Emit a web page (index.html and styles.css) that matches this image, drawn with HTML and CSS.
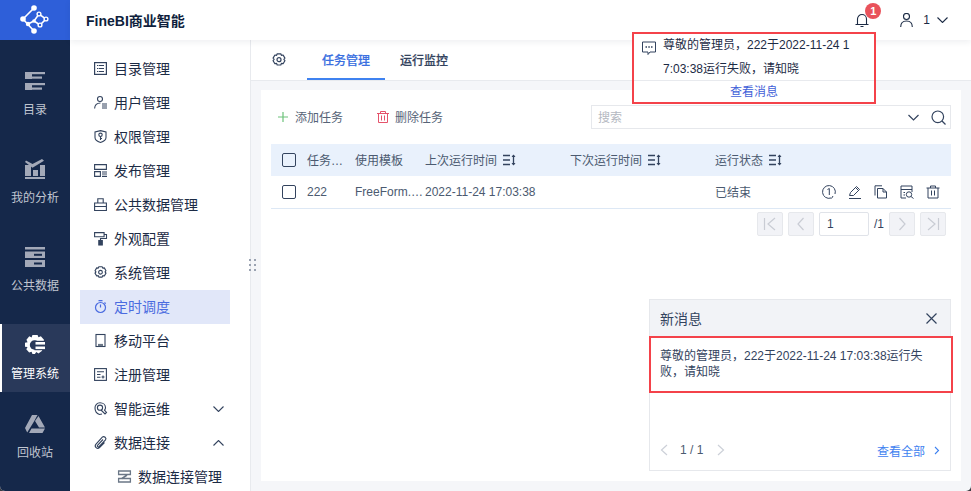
FILE: index.html
```html
<!DOCTYPE html>
<html lang="zh-CN">
<head>
<meta charset="utf-8">
<title>FineBI商业智能</title>
<link rel="stylesheet" href="styles.css">
</head>
<body>
<div class="app">
  <aside class="rail">
    <div class="logo">
      <svg width="32" height="32" viewBox="0 0 32 32" fill="none" stroke="#fff" stroke-width="1.600"><path d="M15 4 4 15l11 12M9 20l6-3 6 4 6-6-7-5-5 7"/><g fill="#fff" stroke="none"><circle cx="15" cy="4" r="2.800"/><circle cx="4" cy="15" r="2.800"/><circle cx="15" cy="27" r="2.800"/><circle cx="9" cy="20" r="2.200"/><circle cx="15" cy="17" r="1.800"/></g><g fill="#2e5fd9" stroke-width="1.400"><circle cx="20" cy="10" r="1.900"/><circle cx="27" cy="15" r="1.900"/><circle cx="21" cy="21" r="1.900"/></g></svg>
    </div>
    <nav class="rail-items">
      <a class="rail-item">
        <svg width="20" height="20" viewBox="0 0 20 20" fill="#a3a9b8"><rect x="0" y="1" width="7" height="7"/><rect x="0" y="12" width="7" height="7"/><rect x="7" y="1" width="13" height="2.200"/><rect x="7" y="5.500" width="10" height="2.200"/><rect x="7" y="12" width="13" height="2.200"/><rect x="7" y="16.500" width="10" height="2.200"/></svg>
        <span>目录</span>
      </a>
      <a class="rail-item">
        <svg width="20" height="20" viewBox="0 0 20 20" fill="#a3a9b8"><rect x="0" y="6" width="6" height="11"/><rect x="8" y="11" width="5" height="6"/><rect x="15" y="6" width="5" height="11"/><rect x="0" y="18" width="20" height="2"/><path d="M0 3 1 1.500 7.500 5 17 0l2 1.800-11.500 7z"/></svg>
        <span>我的分析</span>
      </a>
      <a class="rail-item">
        <svg width="20" height="20" viewBox="0 0 20 20" fill="#a3a9b8"><rect x="0" y="0" width="20" height="2.500"/><path d="M0 4.500h20v6.500H0zM0 13h20v7H0z"/><rect x="9" y="6.800" width="8" height="2" fill="#15284a"/><rect x="9" y="15.500" width="8" height="2" fill="#15284a"/></svg>
        <span>公共数据</span>
      </a>
      <a class="rail-item rail-active">
        <svg width="20" height="20" viewBox="0 0 20 20"><path fill="#fff" transform="scale(1.430)" d="M5.200 0h3.600l.6 1.500 1.700-.6 2.300 2.600-1 1.500 1.600 1.200-.6 2.600-1.600.5.200 1.700-2.600 1.900-1.500-1-1 1.400H5.200l-.6-1.500-1.700.5-2-2.300.9-1.600L0 8.300V5.500l1.800-.5-.8-1.700 2-2.400 1.600.8z"/><circle cx="9.500" cy="10" r="4.700" fill="#29395a"/><rect x="9.500" y="5.800" width="10.500" height="9.400" fill="#29395a"/><rect x="10.500" y="7" width="9.500" height="2.600" fill="#fff"/><rect x="10.500" y="11.500" width="9.500" height="2.600" fill="#fff"/></svg>
        <span>管理系统</span>
      </a>
      <a class="rail-item rail-last">
        <svg width="20" height="20" viewBox="0 0 20 20" fill="#a3a9b8"><path d="M7 1h5.500L9.300 7 5 14l-2.800 4.500L0 14zM13.500 2 20 13.500h-6L10 7zM6.500 14.500H20l-2.500 4.500H4z"/></svg>
        <span>回收站</span>
      </a>
    </nav>
  </aside>

  <div class="body">
    <header class="topbar">
      <h1 class="brand">FineBI商业智能</h1>
      <div class="top-actions">
        <span class="bell">
          <svg width="14" height="14" viewBox="0 0 14 14" fill="none" stroke="#1c2b45" stroke-width="1.100"><path d="M2.500 11V6a4.500 4.500 0 0 1 9 0v5M.5 11.500h13M5.500 13.500h3"/></svg>
          <b class="badge">1</b>
        </span>
        <span class="user">
          <svg width="13" height="14" viewBox="0 0 13 14" fill="none" stroke="#1c2b45" stroke-width="1.100"><circle cx="6.500" cy="3.500" r="3"/><path d="M.7 14c0-4 2.300-6 5.800-6s5.800 2 5.800 6"/></svg>
          <span class="user-name">1</span>
          <svg width="11" height="6" viewBox="0 0 11 6" fill="none" stroke="#1c2b45" stroke-width="1.100"><path d="m.5.500 5 5 5-5"/></svg>
        </span>
      </div>
    </header>

    <div class="workspace">
      <nav class="menu">
        <a class="menu-item"><svg class="mi" viewBox="0 0 13 13" fill="none" stroke="#33435e" stroke-width="1.200"><rect x=".6" y=".6" width="11.800" height="11.800"/><path d="M3 3.500h7M3 6.500h7M3 9.500h7" stroke-dasharray="1 .6 6"/></svg><span>目录管理</span></a>
        <a class="menu-item"><svg class="mi" viewBox="0 0 13 13" fill="none" stroke="#33435e" stroke-width="1.100"><circle cx="6" cy="3" r="2.500"/><path d="M.6 12.500C.8 9 3 7 6.500 7M8 8h5M8 10h5M8 12h5"/></svg><span>用户管理</span></a>
        <a class="menu-item"><svg class="mi" viewBox="0 0 13 13" fill="none" stroke="#33435e" stroke-width="1.100"><path d="M6.500.6 12 2v5.500c0 2.500-2.200 4-5.500 5C3.200 11.500 1 10 1 7.500V2z"/><circle cx="6.500" cy="4.800" r="1.700"/><path d="M6.500 6.500v3.500M6.500 8.500H8"/></svg><span>权限管理</span></a>
        <a class="menu-item"><svg class="mi" viewBox="0 0 13 13" fill="none" stroke="#33435e" stroke-width="1.100"><path d="M.6.600h11.800v4.800H.6zM.6 7.600h5.800v4.800H.6zM8 8h5M8 10h5M8 12.400h5"/></svg><span>发布管理</span></a>
        <a class="menu-item"><svg class="mi" viewBox="0 0 13 13" fill="none" stroke="#33435e" stroke-width="1.100"><path d="M.6 5h11.800v7.500H.6zM3.800 5V.8h5.400V5M.6 8.500h11.800"/></svg><span>公共数据管理</span></a>
        <a class="menu-item"><svg class="mi" viewBox="0 0 13 13" fill="none" stroke="#33435e" stroke-width="1.100"><path d="M.6.600h9.500v4.200H.6zM10 2.500h2.500v4H6.500v2"/><rect x="4.800" y="8.500" width="3.500" height="4.500" fill="#33435e"/></svg><span>外观配置</span></a>
        <a class="menu-item"><svg class="mi" viewBox="0 0 14 14" fill="none" stroke="#33435e" stroke-width="1.200" stroke-linejoin="round"><path d="M5.200.8h3.600l.6 1.500 1.700-.3 1.800 3.100-1 1.200 1 1.400-1.800 3-1.700-.3-.6 1.600H5.200l-.6-1.600-1.700.3-1.800-3 1-1.400-1-1.200L2.900 2l1.700.3z"/><circle cx="7" cy="6.700" r="2"/></svg><span>系统管理</span></a>
        <a class="menu-item menu-active"><svg class="mi" viewBox="0 0 13 13" fill="none" stroke="#4a6be0" stroke-width="1.200"><circle cx="6.500" cy="7.500" r="5"/><path d="M4.500.7h4M10.500 2.500l1.200 1.200M6.500 4.500v3"/></svg><span>定时调度</span></a>
        <a class="menu-item"><svg class="mi" viewBox="0 0 13 13" fill="none" stroke="#33435e" stroke-width="1.100"><rect x="2" y=".5" width="9" height="12"/><path d="M4 11h5" stroke-width="2.200" stroke="#6b7787"/></svg><span>移动平台</span></a>
        <a class="menu-item"><svg class="mi" viewBox="0 0 13 13" fill="none" stroke="#33435e" stroke-width="1.100"><rect x=".6" y=".6" width="11.800" height="11.800"/><path d="M3 3.800h7M3 6.500h3.500M3 9.300h3.500M7.500 9h3M9 7.500v3"/></svg><span>注册管理</span></a>
        <a class="menu-item"><svg class="mi" viewBox="0 0 13 13" fill="none" stroke="#33435e" stroke-width="1.100"><path d="M8 12 5.500 12.500C2.500 11.500 1 9 1 6A5 5 0 0 1 6 .7c3 0 5.500 2 5.500 5 0 1-.4 1.800-1 2.500l2 2.300-1.500 1.500L7 8"/><circle cx="6" cy="5.700" r="2.600"/></svg><span>智能运维</span><svg class="chev" viewBox="0 0 11 6" fill="none" stroke="#33435e" stroke-width="1.100"><path d="m.5.500 5 5 5-5"/></svg></a>
        <a class="menu-item"><svg class="mi" viewBox="0 0 13 13" fill="none" stroke="#33435e" stroke-width="1.100"><path d="M9 3.500 3.500 9.300c-.8 1 .7 2.300 1.500 1.400L11.500 4C13 2 10 -.5 8.300 1.200L1.800 8.300c-1.800 2.500 1.500 5.400 3.700 3.200L10.500 6.500"/></svg><span>数据连接</span><svg class="chev" viewBox="0 0 11 6" fill="none" stroke="#33435e" stroke-width="1.100"><path d="m.5 5.500 5-5 5 5"/></svg></a>
        <a class="menu-item menu-sub"><svg class="mi" viewBox="0 0 13 13" fill="none" stroke="#6b7787" stroke-width="1.300"><path d="M.6 1h11.800v3.500H.6zM.6 8.500h11.800V12H.6z"/><path d="m9 5-5 3.500" stroke-width="1.600"/></svg><span>数据连接管理</span></a>
      </nav>

      <main class="content">
        <div class="tabs">
          <svg class="tab-gear" width="14" height="14" viewBox="0 0 14 14" fill="none" stroke="#33435e" stroke-width="1.200" stroke-linejoin="round"><path d="M5.200.8h3.600l.6 1.500 1.700-.3 1.800 3.100-1 1.200 1 1.400-1.800 3-1.700-.3-.6 1.600H5.200l-.6-1.600-1.700.3-1.800-3 1-1.400-1-1.200L2.900 2l1.700.3z"/><circle cx="7" cy="6.700" r="2"/></svg>
          <a class="tab tab-active"><span>任务管理</span></a>
          <a class="tab"><span>运行监控</span></a>
        </div>
        <section class="panel-wrap">
          <div class="panel">
            <div class="toolbar">
              <a class="tool"><svg width="10" height="10" viewBox="0 0 10 10"><path d="M5 0v10M0 5h10" stroke="#6cc27a" stroke-width="1.200"/></svg><span>添加任务</span></a>
              <a class="tool tool-del"><svg width="12" height="12" viewBox="0 0 12 12" fill="none" stroke="#e5536b"><path d="M0 2.500h12M3.500 2.500V.500h5v2M1.500 2.500v9h9v-9M4.500 4.500v5M7.500 4.500v5"/></svg><span>删除任务</span></a>
              <div class="search">
                <span class="search-ph">搜索</span>
                <svg width="11" height="7" viewBox="0 0 11 7" fill="none" stroke="#33435e" stroke-width="1.200"><path d="m.5 1 5 5 5-5"/></svg>
                <svg width="15" height="15" viewBox="0 0 15 15" fill="none" stroke="#33435e" stroke-width="1.200"><circle cx="6.800" cy="6.800" r="5.800"/><path d="m11 11 3.500 3.500"/></svg>
              </div>
            </div>

            <div class="row row-head">
              <span class="c c-check"><i class="box"></i></span>
              <span class="c c-name"><span class="label">任务…</span></span>
              <span class="c c-tpl"><span class="label">使用模板</span></span>
              <span class="c c-last"><span class="label">上次运行时间</span><svg class="sort" viewBox="0 0 13 12" fill="none" stroke="#33435e" stroke-width="1.300"><path d="M0 1.500h7M0 6h7M0 10.500h7M10.500 1v10"/><path d="m8.500 3 2-2.500 2 2.500zM8.500 9l2 2.500 2-2.500z" fill="#33435e" stroke="none"/></svg></span>
              <span class="c c-next"><span class="label">下次运行时间</span><svg class="sort" viewBox="0 0 13 12" fill="none" stroke="#33435e" stroke-width="1.300"><path d="M0 1.500h7M0 6h7M0 10.500h7M10.500 1v10"/><path d="m8.500 3 2-2.500 2 2.500zM8.500 9l2 2.500 2-2.500z" fill="#33435e" stroke="none"/></svg></span>
              <span class="c c-state"><span class="label">运行状态</span><svg class="sort" viewBox="0 0 13 12" fill="none" stroke="#33435e" stroke-width="1.300"><path d="M0 1.500h7M0 6h7M0 10.500h7M10.500 1v10"/><path d="m8.500 3 2-2.500 2 2.500zM8.500 9l2 2.500 2-2.500z" fill="#33435e" stroke="none"/></svg></span>
            </div>
            <div class="row row-data">
              <span class="c c-check"><i class="box"></i></span>
              <span class="c c-name">222</span>
              <span class="c c-tpl">FreeForm.…</span>
              <span class="c c-last">2022-11-24 17:03:38</span>
              <span class="c c-next"></span>
              <span class="c c-state"><span class="label">已结束</span></span>
              <span class="c c-ops">
                <svg class="op" viewBox="0 0 14 14" fill="none" stroke="#33435e"><path d="M9 13A6.400 6.400 0 1 1 13 9M5.500 4.500 7.300 3.500V10M11 11l-1.500 2.500"/></svg>
                <svg class="op" viewBox="0 0 14 14" fill="none" stroke="#33435e"><path d="M1 13.500h12M1.500 10.500l1-3 6-6 3 3-6 6zM7.500 2.500l3 3"/></svg>
                <svg class="op" viewBox="0 0 14 14" fill="none" stroke="#33435e"><path d="M3.500 3.500h5.500l3.500 3.500v6h-9zM9 3.500V7h3.500M1 10.500V.8h7"/></svg>
                <svg class="op" viewBox="0 0 14 14" fill="none" stroke="#33435e"><path d="M6 13H1V1h11v6M1 4.500h11M3.500 7.500H5M3.500 10H5"/><circle cx="9" cy="9.500" r="2.700"/><path d="m11 11.500 2.500 2"/></svg>
                <svg class="op" viewBox="0 0 14 14" fill="none" stroke="#33435e"><path d="M.5 3h13M4.500 3V1h5v2M2 3v10h10V3M5.500 5.500v5M8.500 5.500v5"/></svg>
              </span>
            </div>

            <div class="pager">
              <a class="pg"><svg viewBox="0 0 14 14" fill="none" stroke="#c9ccd4" stroke-width="1.200"><path d="M1.500 1v12M12 1 5 7l7 6"/></svg></a>
              <a class="pg"><svg viewBox="0 0 14 14" fill="none" stroke="#c9ccd4" stroke-width="1.200"><path d="M9.500 1l-5.500 6 5.500 6"/></svg></a>
              <span class="pg-input">1</span>
              <span class="pg-total">/1</span>
              <a class="pg"><svg viewBox="0 0 14 14" fill="none" stroke="#c9ccd4" stroke-width="1.200"><path d="M4.500 1l5.500 6-5.500 6"/></svg></a>
              <a class="pg"><svg viewBox="0 0 14 14" fill="none" stroke="#c9ccd4" stroke-width="1.200"><path d="M12.500 1v12M2 1l7 6-7 6"/></svg></a>
            </div>
          </div>
        </section>
      </main>
    </div>
  </div>

  <div class="grip" aria-hidden="true"><i></i><i></i><i></i><i></i><i></i><i></i></div>

  <div class="pop">
    <div class="pop-body">
      <svg class="pop-icon" width="14" height="14" viewBox="0 0 14 14" fill="none" stroke="#33435e"><path d="M.5 1h13v10H8l-2 2.500V11H.500z"/><path d="M3.500 6h1.500M6.300 6h1.500M9 6h1.500" stroke-width="1.400"/></svg>
      <p class="pop-text">尊敬的管理员，222于2022-11-24 17:03:38运行失败，请知晓</p>
    </div>
    <a class="pop-link">查看消息</a>
  </div>

  <div class="toast">
    <div class="toast-head"><span>新消息</span><svg width="11" height="11" viewBox="0 0 11 11" fill="none" stroke="#33435e" stroke-width="1.200"><path d="m.5.500 10 10M10.500.500l-10 10"/></svg></div>
    <p class="toast-msg">尊敬的管理员，222于2022-11-24 17:03:38运行失败，请知晓</p>
    <div class="toast-foot">
      <svg width="8" height="12" viewBox="0 0 8 12" fill="none" stroke="#ccd0d8" stroke-width="1.200"><path d="M7 1 1.500 6 7 11"/></svg>
      <span class="toast-count">1 / 1</span>
      <svg width="8" height="12" viewBox="0 0 8 12" fill="none" stroke="#ccd0d8" stroke-width="1.200"><path d="m1 1 5.500 5L1 11"/></svg>
      <a class="toast-all">查看全部</a>
      <svg width="6" height="9" viewBox="0 0 6 9" fill="none" stroke="#3f82f0" stroke-width="1.100"><path d="m1 1 3.500 3.500L1 8"/></svg>
    </div>
  </div>
</div>
</body>
</html>
```
FILE: styles.css
```css
* { box-sizing: border-box; }
html, body { margin: 0; height: 100%; overflow: hidden; background: #3a3d44; }
body { font-family: "Liberation Sans", "Noto Sans CJK SC", sans-serif; font-size: 12px; color: #1c2b45; }
p, h1 { margin: 0; }
a { color: inherit; text-decoration: none; }
.app { position: relative; display: flex; width: 971px; height: 491px; overflow: hidden; background: #f5f6f9; border-radius: 0 0 5px 5px; }

.rail { width: 70px; flex: none; background: #15284a; display: flex; flex-direction: column; }
.logo { height: 40px; background: #2e5fd9; display: flex; align-items: center; justify-content: center; }
.rail-items { display: flex; flex-direction: column; gap: 20px; padding-top: 20px; }
.rail-item { height: 68px; display: flex; flex-direction: column; align-items: center; padding-top: 11px; color: #c0c5d0; }
.rail-item svg { margin-bottom: 11px; }
.rail-item span { line-height: 16px; }
.rail-active { background: #29395a; box-shadow: inset 2px 0 0 #fff; color: #fff; }
.rail-last { margin-top: -9px; }

.body { flex: 1; min-width: 0; display: flex; flex-direction: column; }
.topbar { position: relative; z-index: 2; height: 40px; flex: none; background: #fff; box-shadow: 0 2px 6px rgba(40, 50, 80, .08); display: flex; align-items: center; justify-content: space-between; padding: 0 23px 0 16px; }
.brand { font-size: 14px; font-weight: 700; color: #0f1f3d; }
.top-actions { display: flex; align-items: center; gap: 31px; }
.bell { position: relative; display: flex; }
.badge { position: absolute; left: 10px; top: -10px; width: 16px; height: 16px; border-radius: 50%; background: #e9525b; color: #fff; font-size: 11px; line-height: 16px; text-align: center; font-weight: 700; }
.user { display: flex; align-items: center; gap: 7px; }
.user-name { font-size: 12px; margin-left: 3px; }

.workspace { flex: 1; min-height: 0; display: flex; }
.menu { width: 181px; flex: none; background: #fff; padding: 12px 20px 0 10px; overflow: hidden; border-right: 1px solid #e8eaee; }
.menu-item { position: relative; display: flex; align-items: center; gap: 7px; height: 34px; padding: 0 0 2px 14px; font-size: 14px; color: #1c2b45; }
.mi { width: 13px; height: 13px; flex: none; overflow: visible; }
.chev { position: absolute; left: 133px; top: 14px; width: 11px; height: 6px; }
.menu-active { background: #e1e7f9; color: #4a6be0; }
.menu-sub { padding-left: 38px; }

.content { flex: 1; min-width: 0; display: flex; flex-direction: column; }
.tabs { height: 41px; flex: none; background: #fff; border-bottom: 1px solid #e8eaee; display: flex; align-items: stretch; padding-left: 21px; }
.tab-gear { align-self: center; margin-right: 21px; }
.tab { display: flex; align-items: center; justify-content: center; width: 78px; padding-bottom: 2px; font-size: 12px; color: #33435e; font-weight: 500; -webkit-text-stroke: .2px; }
.tab-active { color: #3a6fe0; border-bottom: 2px solid #3f82f0; padding-bottom: 0; }

.panel-wrap { flex: 1; min-height: 0; padding: 9px 10px 10px; }
.panel { position: relative; height: 100%; background: #fff; padding: 15px 10px 0; }
.toolbar { display: flex; align-items: center; height: 24px; margin-bottom: 15px; padding-left: 7px; }
.tool { display: flex; align-items: center; gap: 7px; color: #566377; width: 99px; }
.tool span { padding-bottom: 2px; }
.tool-del { gap: 6px; width: 214px; }
.search { flex: 1; height: 24px; border: 1px solid #e6e8ec; display: flex; align-items: center; gap: 12px; padding: 0 4px 0 6px; }
.search-ph { flex: 1; color: #b4b8c1; padding-bottom: 2px; }

.row { display: flex; align-items: center; height: 32px; color: #4b5a70; }
.row-head { background: #e9f1fc; }
.row-data { height: 33px; border-bottom: 1px solid #dde8f5; }
.c { display: flex; align-items: center; white-space: nowrap; }
.label { padding-bottom: 2px; }
.c-check { width: 36px; padding-left: 11px; }
.box { display: block; width: 14px; height: 14px; border: 1px solid #33435e; border-radius: 2px; }
.c-name { width: 48px; }
.c-tpl { width: 70px; }
.c-last, .c-next { width: 145px; }
.c-state { width: 107px; }
.c-ops { gap: 12px; padding-bottom: 1px; }
.sort { width: 13px; height: 12px; margin-left: 6px; }
.op { width: 14px; height: 14px; }

.pager { display: flex; align-items: center; justify-content: flex-end; gap: 5px; margin-top: 3px; padding-right: 5px; }
.pg { width: 26px; height: 24px; background: #f2f3f7; border: 1px solid #e6e8ec; border-radius: 2px; display: flex; align-items: center; justify-content: center; }
.pg svg { width: 14px; height: 14px; }
.pg-input { width: 50px; height: 24px; border: 1px solid #e0e3e9; border-radius: 2px; padding-left: 7px; line-height: 22px; color: #33435e; }
.pg-total { color: #33435e; width: 10px; }

.grip { position: absolute; left: 249px; top: 259px; display: grid; grid-template-columns: 2px 2px; gap: 3px 3px; }
.grip i { width: 2px; height: 2px; background: #9aa2b1; }

.pop { position: absolute; z-index: 5; left: 632px; top: 32px; width: 244px; height: 72px; border: 2px solid #f4424a; background: #fff; color: #1c2b45; }
.pop-body { display: flex; height: 46px; padding: 5px 0 0 8px; gap: 7px; }
.pop-icon { margin-top: 2px; flex: none; }
.pop-text { width: 190px; line-height: 24px; word-break: break-all; margin-top: -6px; }
.pop-link { display: block; border-top: 1px solid #e8eaee; text-align: center; line-height: 23px; color: #3f5fd8; }

.toast { position: absolute; z-index: 4; left: 649px; top: 299px; width: 302px; height: 172px; background: #fff; border: 1px solid #e6e8ec; }
.toast-head { height: 36px; background: #f2f3f7; display: flex; align-items: center; justify-content: space-between; padding: 0 13px 0 10px; font-size: 14px; color: #33435e; }
.toast-msg { width: 304px; margin-left: -1px; height: 57px; border: 2px solid #f4424a; padding: 10px 24px 0 9px; line-height: 16px; color: #33435e; position: relative; background: #fff; }
.toast-foot { position: absolute; left: 10px; right: 10px; bottom: 10px; display: flex; align-items: center; color: #4b5a70; height: 20px; }
.toast-count { margin: 0 14px 0 12px; }
.toast-all { margin-left: auto; margin-right: 9px; color: #3f82f0; }
```
